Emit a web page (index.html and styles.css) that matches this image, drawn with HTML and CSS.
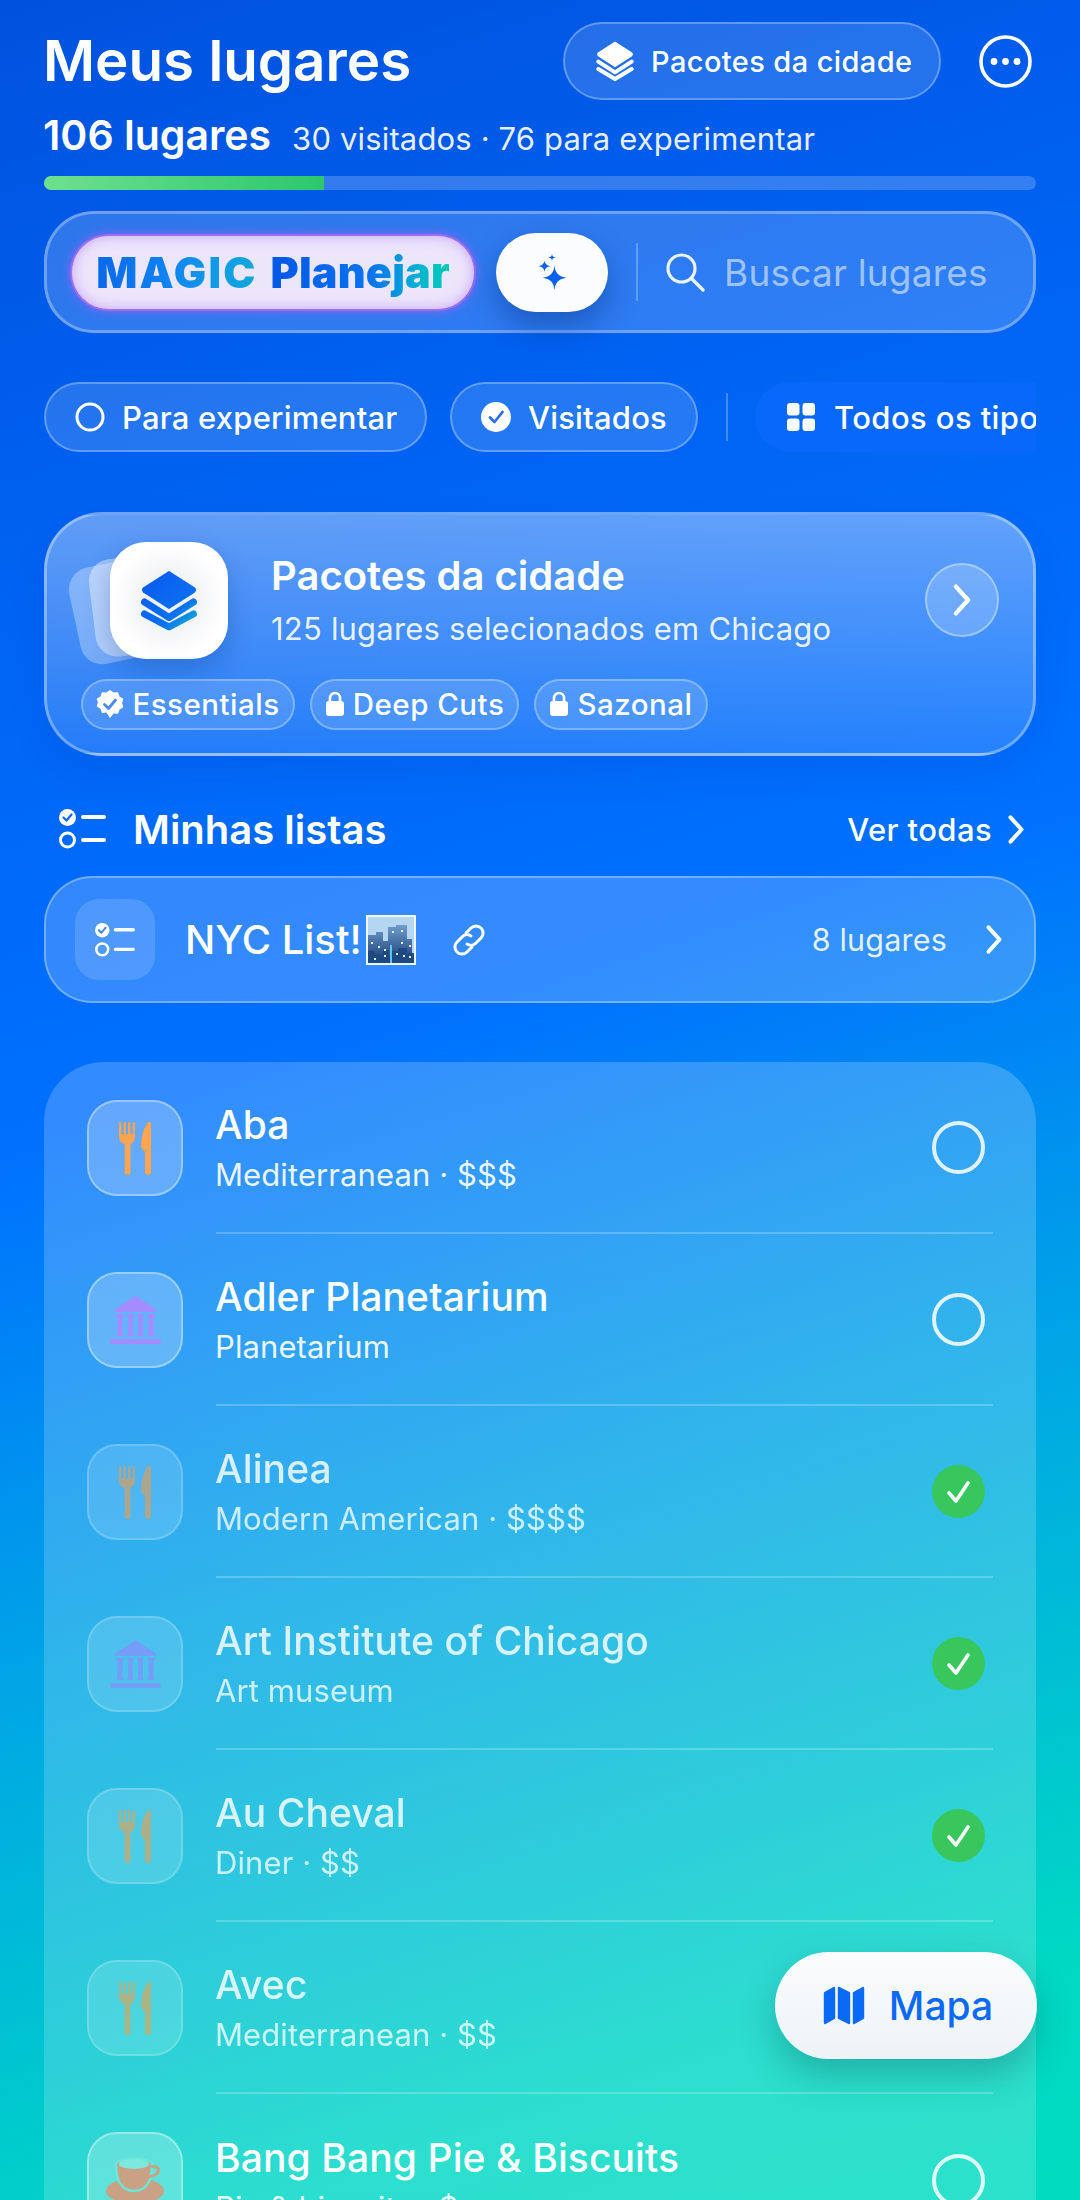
FILE: index.html
```html
<!DOCTYPE html>
<html lang="pt-BR">
<head>
  <meta charset="UTF-8" />
  <meta name="viewport" content="width=device-width, initial-scale=1.0" />
  <title>Meus lugares</title>
  <link rel="stylesheet" href="styles.css">
</head>
<body>
  <!-- shared icons -->
  <svg class="sprite" aria-hidden="true">
    <defs>
      <linearGradient id="stackGrad" gradientUnits="userSpaceOnUse" x1="6" y1="6" x2="54" y2="58">
        <stop offset="0" stop-color="#0a5cf0"/>
        <stop offset="0.65" stop-color="#0a70f0"/>
        <stop offset="1" stop-color="#14bcc8"/>
      </linearGradient>
      <linearGradient id="cityGrad" x1="0" y1="0" x2="0" y2="1">
        <stop offset="0" stop-color="#6f9ccc"/>
        <stop offset="1" stop-color="#163c74"/>
      </linearGradient>
    </defs>
    <symbol id="i-stack" viewBox="0 0 56 60">
      <path d="M28 2 L53 18 Q55 20 53 22 L28 38 L3 22 Q1 20 3 18 Z" fill="currentColor" stroke="currentColor" stroke-width="2" stroke-linejoin="round"/>
      <path d="M3 31 L28 47 L53 31" fill="none" stroke="currentColor" stroke-width="6" stroke-linecap="round" stroke-linejoin="round"/>
      <path d="M3 42 L28 57 L53 42" fill="none" stroke="currentColor" stroke-width="6" stroke-linecap="round" stroke-linejoin="round"/>
    </symbol>
    <symbol id="i-fork" viewBox="0 0 32 53">
      <path d="M0 1.2a1.2 1.2 0 0 1 2.4 0V12h2.200V1.200a1.200 1.200 0 0 1 2.400 0V12h2V1.200a1.200 1.200 0 0 1 2.400 0V12h2.200V1.200a1.200 1.200 0 0 1 2.400 0V15c0 3.500-2 6-4.500 7V50a2.900 2.900 0 0 1-5.800 0V22C2 21 0 18.500 0 15Z" fill="currentColor"/>
      <path d="M32 2C32-.5 29-.5 28 1.500 24 8 22 15 22 23c0 3.500 1.500 5.500 4 6V50a3 3 0 0 0 6 0Z" fill="currentColor"/>
    </symbol>
    <symbol id="i-museum" viewBox="0 0 51 49">
      <path d="M25.500 0 L46 13.500 Q47 16 45 16 H6 Q4 16 5 13.500 Z" fill="currentColor"/>
      <path d="M6 18h8l-1.500 3v16l1.500 3H6l1.500-3V21ZM17 18h7l-1.200 3v16l1.200 3h-7l1.200-3V21ZM27 18h7l-1.200 3v16l1.200 3h-7l1.200-3V21ZM37 18h8l-1.500 3v16l1.500 3h-8l1.500-3V21Z" fill="currentColor"/>
      <rect x="0" y="43" width="51" height="5" rx="1.500" fill="currentColor"/>
    </symbol>
    <symbol id="i-cup" viewBox="0 0 58 50">
      <ellipse cx="29" cy="36" rx="29" ry="13" fill="currentColor"/>
      <path d="M10 9 C10 2 46 2 46 9 C46 26 40 36 28 36 C16 36 10 26 10 9Z" fill="currentColor" stroke="#6be6d8" stroke-width="2.500"/>
      <ellipse cx="28" cy="9" rx="15" ry="5" fill="#7de8dc"/>
      <path d="M45 12 C55 9 56 21 42 22" fill="none" stroke="currentColor" stroke-width="3"/>
    </symbol>
    <symbol id="i-lists" viewBox="0 0 47 40">
      <circle cx="8.500" cy="8.500" r="8.500" fill="currentColor"/>
      <path d="M4.500 8.500l3 3 5-6" fill="none" stroke="var(--tick, #0a6af5)" stroke-width="2.200" stroke-linecap="round" stroke-linejoin="round"/>
      <circle cx="8.500" cy="31" r="7" fill="none" stroke="currentColor" stroke-width="3"/>
      <path d="M24 8h21M24 31h21" stroke="currentColor" stroke-width="4" stroke-linecap="round"/>
    </symbol>
    <symbol id="i-chev" viewBox="0 0 18 28">
      <path d="M4 3 L14 14 L4 25" fill="none" stroke="currentColor" stroke-width="3.600" stroke-linecap="round" stroke-linejoin="round"/>
    </symbol>
    <symbol id="i-lock" viewBox="0 0 20 26">
      <path d="M5 11V7a5 5 0 0 1 10 0v4" fill="none" stroke="currentColor" stroke-width="2.600"/>
      <rect x="1" y="10" width="18" height="15" rx="3" fill="currentColor"/>
    </symbol>
  </svg>

  <main class="page">
    <header class="top-row">
      <h1 class="page-title">Meus lugares</h1>
      <div class="top-actions">
        <button class="glass-chip packs-chip">
          <svg class="packs-icon"><use href="#i-stack"/></svg>
          Pacotes da cidade
        </button>
        <svg class="more-icon" viewBox="0 0 53 53">
          <circle cx="26.500" cy="26.500" r="24.500" fill="none" stroke="#fff" stroke-width="3.600"/>
          <circle cx="15" cy="26.500" r="3.400" fill="#fff"/>
          <circle cx="26.500" cy="26.500" r="3.400" fill="#fff"/>
          <circle cx="38" cy="26.500" r="3.400" fill="#fff"/>
        </svg>
      </div>
    </header>

    <div class="stats-row">
      <strong class="stats-total">106 lugares</strong>
      <span class="stats-detail">30 visitados · 76 para experimentar</span>
    </div>
    <div class="progress"><div class="progress-fill"></div></div>

    <section class="search-bar">
      <div class="magic-pill"><span class="magic-word">MAGIC</span> <span class="plan-word">Planejar</span></div>
      <button class="sparkle-btn">
        <svg class="sparkle-icon" viewBox="0 0 36 44">
          <path d="M21 14 C22 23 25 27 35 29 C25 31 22 35 21 44 C20 35 17 31 7 29 C17 27 20 23 21 14Z" fill="#0a62ec"/>
          <path d="M9 8 C9.500 12 11 14 16 15 C11 16 9.500 18 9 22 C8.500 18 7 16 2 15 C7 14 8.500 12 9 8Z" fill="#0a62ec"/>
          <path d="M18 0 C18.300 3 19 4 22.500 4.500 C19 5 18.300 6 18 9 C17.700 6 17 5 13.500 4.500 C17 4 17.700 3 18 0Z" fill="#0a62ec"/>
        </svg>
      </button>
      <div class="v-rule search-rule"></div>
      <svg class="search-icon" viewBox="0 0 40 40">
        <circle cx="16.500" cy="16.500" r="13.500" fill="none" stroke="#fff" stroke-opacity=".9" stroke-width="3.200"/>
        <path d="M26.500 26.500 L38 38" stroke="#fff" stroke-opacity=".9" stroke-width="3.400" stroke-linecap="round"/>
      </svg>
      <span class="search-text">Buscar lugares</span>
    </section>

    <nav class="filters">
      <button class="glass-chip filter-chip filter-try">
        <svg class="filter-icon" viewBox="0 0 30 30"><circle cx="15" cy="15" r="13" fill="none" stroke="#fff" stroke-width="3"/></svg>
        Para experimentar
      </button>
      <button class="glass-chip filter-chip filter-seen">
        <svg class="filter-icon" viewBox="0 0 30 30"><circle cx="15" cy="15" r="15" fill="#fff"/><path d="M9 15.500l4.500 4.500 8-10" fill="none" stroke="#2a70e8" stroke-width="2.800" stroke-linecap="round" stroke-linejoin="round"/></svg>
        Visitados
      </button>
      <div class="v-rule filter-rule"></div>
      <button class="type-chip">
        <svg class="grid-icon" viewBox="0 0 28 28">
          <rect width="12.500" height="12.500" rx="3" fill="#fff"/>
          <rect x="15.500" width="12.500" height="12.500" rx="3" fill="#fff"/>
          <rect y="15.500" width="12.500" height="12.500" rx="3" fill="#fff"/>
          <rect x="15.500" y="15.500" width="12.500" height="12.500" rx="3" fill="#fff"/>
        </svg>
        Todos os tipos
      </button>
    </nav>

    <section class="packs-card">
      <div class="packs-main">
        <div class="packs-art">
          <div class="art-back art-back-far"></div>
          <div class="art-back art-back-near"></div>
          <div class="art-front">
            <svg class="art-stack" viewBox="0 0 56 60">
              <path d="M28 1 L53 17 Q55 19 53 21 L28 37 L3 21 Q1 19 3 17 Z" fill="url(#stackGrad)" stroke="url(#stackGrad)" stroke-width="2" stroke-linejoin="round"/>
              <path d="M3.500 31 L28 46.500 L52.500 31" fill="none" stroke="url(#stackGrad)" stroke-width="7" stroke-linecap="round" stroke-linejoin="round"/>
              <path d="M3.500 43 L28 56 L52.500 43" fill="none" stroke="url(#stackGrad)" stroke-width="7" stroke-linecap="round" stroke-linejoin="round"/>
            </svg>
          </div>
        </div>
        <div class="packs-text">
          <h2 class="packs-title">Pacotes da cidade</h2>
          <p class="packs-sub">125 lugares selecionados em Chicago</p>
        </div>
        <div class="circle-next"><svg class="chev-lg"><use href="#i-chev"/></svg></div>
      </div>
      <div class="pack-tags">
        <span class="pack-tag tag-ess">
          <svg class="tag-badge" viewBox="0 0 28 28">
            <path d="M14 0l3.600 2.600 4.400-.4 1.600 4.200 3.700 2.400-1.200 4.200 1.200 4.200-3.700 2.400-1.600 4.200-4.400-.4L14 28l-3.600-5.400-4.400.4-1.600-4.200L.7 16.400 1.900 12.200.7 8.800l3.700-2.400L6 2.200l4.400.4Z" fill="#fff"/>
            <path d="M8.500 14.500l4 4 7-8.500" fill="none" stroke="#4a8cec" stroke-width="2.800" stroke-linecap="round" stroke-linejoin="round"/>
          </svg>
          Essentials
        </span>
        <span class="pack-tag tag-deep"><svg class="tag-lock"><use href="#i-lock"/></svg>Deep Cuts</span>
        <span class="pack-tag tag-season"><svg class="tag-lock"><use href="#i-lock"/></svg>Sazonal</span>
      </div>
    </section>

    <div class="section-head">
      <svg class="section-icon"><use href="#i-lists"/></svg>
      <h2 class="section-title">Minhas listas</h2>
      <a class="see-all">Ver todas <svg class="chev-sm"><use href="#i-chev"/></svg></a>
    </div>

    <section class="list-card">
      <div class="list-icon-box"><svg class="list-icon"><use href="#i-lists"/></svg></div>
      <span class="list-name">NYC List!</span>
      <svg class="city-emoji" viewBox="0 0 50 50">
        <rect width="50" height="50" fill="#f2f5f8"/>
        <rect x="2" y="2" width="46" height="46" fill="#b4d6f0"/>
        <path d="M2 48V20h8v-3h7v9h5V12h8v-2h11v14h5v24Z" fill="url(#cityGrad)"/>
        <path d="M2 48V36h7v3h8v-4h6v13ZM26 48V36h6v-3h9v5h7v10Z" fill="#1d4a82"/>
        <rect x="24" y="30" width="2" height="18" fill="#58c8ee"/>
        <path d="M5 27h2v2H5ZM12 31h2v2h-2ZM18 34h2v2h-2ZM18 40h2v2h-2ZM35 27h2v2h-2ZM43 30h2v2h-2ZM30 38h2v2h-2ZM37 40h2v2h-2ZM43 41h2v2h-2ZM8 43h2v2H8ZM26 16h2v2h-2ZM35 15h2v2h-2Z" fill="#e6eef6"/>
      </svg>
      <svg class="link-icon" viewBox="0 0 34 34">
        <path d="M14 10l5-5a7 7 0 0 1 10 10l-5 5a7 7 0 0 1-9 1" fill="none" stroke="#fff" stroke-width="3" stroke-linecap="round"/>
        <path d="M20 24l-5 5A7 7 0 0 1 5 19l5-5a7 7 0 0 1 9-1" fill="none" stroke="#fff" stroke-width="3" stroke-linecap="round"/>
      </svg>
      <span class="list-count">8 lugares</span>
      <svg class="chev-md"><use href="#i-chev"/></svg>
    </section>

    <section class="places">
      <article class="place">
        <div class="place-icon icon-food"><svg class="glyph-food"><use href="#i-fork"/></svg></div>
        <div class="place-body">
          <div class="place-text">
            <h3 class="place-name">Aba</h3>
            <p class="place-sub">Mediterranean · $$$</p>
          </div>
          <span class="radio"></span>
        </div>
      </article>
      <article class="place">
        <div class="place-icon icon-museum"><svg class="glyph-museum"><use href="#i-museum"/></svg></div>
        <div class="place-body">
          <div class="place-text">
            <h3 class="place-name">Adler Planetarium</h3>
            <p class="place-sub">Planetarium</p>
          </div>
          <span class="radio"></span>
        </div>
      </article>
      <article class="place is-visited">
        <div class="place-icon icon-food"><svg class="glyph-food"><use href="#i-fork"/></svg></div>
        <div class="place-body">
          <div class="place-text">
            <h3 class="place-name">Alinea</h3>
            <p class="place-sub">Modern American · $$$$</p>
          </div>
          <span class="done"><svg viewBox="0 0 53 53"><path d="M17 28l7 8 12-18" fill="none" stroke="#fff" stroke-width="3.600" stroke-linecap="round" stroke-linejoin="round"/></svg></span>
        </div>
      </article>
      <article class="place is-visited">
        <div class="place-icon icon-museum"><svg class="glyph-museum"><use href="#i-museum"/></svg></div>
        <div class="place-body">
          <div class="place-text">
            <h3 class="place-name">Art Institute of Chicago</h3>
            <p class="place-sub">Art museum</p>
          </div>
          <span class="done"><svg viewBox="0 0 53 53"><path d="M17 28l7 8 12-18" fill="none" stroke="#fff" stroke-width="3.600" stroke-linecap="round" stroke-linejoin="round"/></svg></span>
        </div>
      </article>
      <article class="place is-visited">
        <div class="place-icon icon-food"><svg class="glyph-food"><use href="#i-fork"/></svg></div>
        <div class="place-body">
          <div class="place-text">
            <h3 class="place-name">Au Cheval</h3>
            <p class="place-sub">Diner · $$</p>
          </div>
          <span class="done"><svg viewBox="0 0 53 53"><path d="M17 28l7 8 12-18" fill="none" stroke="#fff" stroke-width="3.600" stroke-linecap="round" stroke-linejoin="round"/></svg></span>
        </div>
      </article>
      <article class="place is-visited">
        <div class="place-icon icon-food"><svg class="glyph-food"><use href="#i-fork"/></svg></div>
        <div class="place-body">
          <div class="place-text">
            <h3 class="place-name">Avec</h3>
            <p class="place-sub">Mediterranean · $$</p>
          </div>
        </div>
      </article>
      <article class="place">
        <div class="place-icon icon-cafe"><svg class="glyph-cup"><use href="#i-cup"/></svg></div>
        <div class="place-body">
          <div class="place-text">
            <h3 class="place-name">Bang Bang Pie &amp; Biscuits</h3>
            <p class="place-sub">Pie &amp; biscuits · $</p>
          </div>
          <span class="radio"></span>
        </div>
      </article>
    </section>
  </main>

  <button class="map-btn">
    <svg class="map-icon" viewBox="0 0 42 39">
      <path d="M2 7 L11 2 V32 L2 37 Z" fill="#0a6af5" stroke="#0a6af5" stroke-width="2.400" stroke-linejoin="round"/>
      <path d="M16 2 L26 7 V37 L16 32 Z" fill="#0a6af5" stroke="#0a6af5" stroke-width="2.400" stroke-linejoin="round"/>
      <path d="M31 7 L40 2 V32 L31 37 Z" fill="#0a6af5" stroke="#0a6af5" stroke-width="2.400" stroke-linejoin="round"/>
    </svg>
    Mapa
  </button>
</body>
</html>
```

FILE: styles.css
```css
* {
  box-sizing: border-box;
}
html, body {
  margin: 0;
  padding: 0;
}
body {
  position: relative;
  width: 1080px;
  height: 2200px;
  overflow: hidden;
  font-family: 'Inter', sans-serif;
  color: #fff;
  background: linear-gradient(162deg, #0052de 0%, #0066f6 28%, #0070ff 45%, #00a5e6 66%, #00d8c4 90%, #00dcc0 100%);
}
button {
  font-family: inherit;
  color: inherit;
  border: none;
  padding: 0;
}
h1, h2, h3, p {
  margin: 0;
}
.sprite {
  position: absolute;
  width: 0;
  height: 0;
}
.page {
  padding: 22px 44px 0;
}

/* header */
.top-row {
  display: flex;
  align-items: center;
  justify-content: space-between;
  height: 78px;
}
.page-title {
  margin-left: -1px;
  font-size: 56.5px;
  font-weight: 600;
  line-height: 78px;
}
.top-actions {
  display: flex;
  align-items: center;
  gap: 38px;
  padding-right: 4px;
}
.glass-chip {
  display: flex;
  align-items: center;
  background: rgba(255, 255, 255, 0.14);
  border: 2px solid rgba(255, 255, 255, 0.28);
  border-radius: 40px;
  color: #fff;
}
.packs-chip {
  width: 378px;
  height: 78px;
  padding-left: 31px;
  gap: 17px;
  font-size: 29px;
  font-weight: 550;
  letter-spacing: 0.4px;
}
.packs-icon {
  width: 38px;
  height: 40px;
  color: #fff;
}
.more-icon {
  width: 53px;
  height: 53px;
}
.stats-row {
  display: flex;
  align-items: baseline;
  height: 40px;
  margin-top: 15px;
  gap: 21px;
  line-height: 40px;
}
.stats-total {
  margin-left: -1px;
  font-size: 41px;
  font-weight: 600;
}
.stats-detail {
  font-size: 31px;
  letter-spacing: 0.15px;
  color: rgba(255, 255, 255, 0.92);
}
.progress {
  height: 14px;
  margin-top: 21px;
  border-radius: 7px;
  background: rgba(255, 255, 255, 0.2);
  overflow: hidden;
}
.progress-fill {
  width: 280px;
  height: 100%;
  background: linear-gradient(90deg, #6ee08e, #2cc86c);
}

/* search */
.search-bar {
  display: flex;
  align-items: center;
  height: 122px;
  margin-top: 21px;
  padding-left: 25px;
  background: rgba(255, 255, 255, 0.18);
  border: 3px solid rgba(255, 255, 255, 0.3);
  border-radius: 50px;
}
.magic-pill {
  display: flex;
  align-items: center;
  justify-content: center;
  gap: 13px;
  width: 402px;
  height: 73px;
  border-radius: 38px;
  background: #ece6fb;
  box-shadow: 0 0 0 2px #9d6ef2, 0 0 10px 3px rgba(150, 100, 245, 0.75), inset 0 0 14px rgba(190, 150, 250, 0.8);
  font-size: 43px;
  font-weight: 900;
}
.magic-word {
  letter-spacing: 2.2px;
  background: linear-gradient(90deg, #0a68e8, #0f80f2 40%, #1098e8 70%, #10a8d8);
  -webkit-background-clip: text;
  background-clip: text;
  color: transparent;
}
.plan-word {
  letter-spacing: 0.2px;
  padding-bottom: 6px;
  margin-bottom: -6px;
  background: linear-gradient(90deg, #0058e6 0%, #0a72f0 55%, #00b8d0 85%, #00ccb0 100%);
  -webkit-background-clip: text;
  background-clip: text;
  color: transparent;
}
.sparkle-btn {
  display: flex;
  align-items: center;
  justify-content: center;
  width: 112px;
  height: 79px;
  margin-left: 22px;
  border-radius: 40px;
  background: #fbfcfe;
  box-shadow: 0 14px 30px rgba(0, 40, 120, 0.4);
}
.sparkle-icon {
  width: 30px;
  height: 38px;
}
.v-rule {
  width: 2px;
  background: rgba(255, 255, 255, 0.25);
}
.search-rule {
  height: 58px;
  margin-left: 28px;
}
.search-icon {
  width: 40px;
  height: 40px;
  margin-left: 27px;
}
.search-text {
  margin-left: 19px;
  font-size: 37px;
  letter-spacing: 0.2px;
  color: rgba(255, 255, 255, 0.55);
}

/* filters */
.filters {
  display: flex;
  align-items: center;
  height: 70px;
  margin-top: 49px;
  overflow: hidden;
}
.filter-chip {
  height: 70px;
  padding-left: 29px;
  gap: 17px;
  font-size: 31px;
  font-weight: 500;
  letter-spacing: 0.2px;
  flex: none;
}
.filter-try {
  width: 383px;
}
.filter-seen {
  width: 248px;
  margin-left: 23px;
}
.filter-icon {
  width: 30px;
  height: 30px;
}
.filter-rule {
  height: 48px;
  margin-left: 28px;
  flex: none;
}
.type-chip {
  display: flex;
  align-items: center;
  flex: none;
  height: 70px;
  margin-left: 27px;
  padding: 0 32px;
  gap: 19px;
  border-radius: 35px;
  background: #0868fc;
  font-size: 31px;
  font-weight: 550;
  letter-spacing: 0.4px;
}
.grid-icon {
  width: 28px;
  height: 28px;
}

/* packs card */
.packs-card {
  height: 244px;
  margin-top: 60px;
  padding: 27px 34px 0 27px;
  border: 3px solid rgba(255, 255, 255, 0.32);
  border-radius: 58px;
  background: linear-gradient(180deg, rgba(255, 255, 255, 0.38), rgba(255, 255, 255, 0.14));
  box-shadow: 0 16px 34px rgba(0, 50, 150, 0.12);
}
.packs-main {
  display: flex;
  align-items: center;
  height: 117px;
}
.packs-art {
  position: relative;
  width: 193px;
  height: 117px;
  flex: none;
  margin-left: 4px;
}
.art-back {
  position: absolute;
  width: 90px;
  height: 98px;
  border-radius: 22px;
}
.art-back-far {
  left: -4px;
  top: 20px;
  background: rgba(255, 255, 255, 0.3);
  transform: rotate(-12deg);
}
.art-back-near {
  left: 14px;
  top: 14px;
  background: rgba(255, 255, 255, 0.42);
  transform: rotate(-7deg);
}
.art-front {
  position: absolute;
  left: 32px;
  top: 0;
  display: flex;
  align-items: center;
  justify-content: center;
  width: 118px;
  height: 117px;
  border-radius: 36px;
  background: radial-gradient(circle, #f0f1f4 25%, #fff 70%);
  box-shadow: 0 10px 26px rgba(0, 40, 120, 0.25);
}
.art-stack {
  width: 56px;
  height: 60px;
}
.packs-text {
  flex: 1;
  margin-top: -2px;
}
.packs-title {
  font-size: 40px;
  font-weight: 600;
  line-height: 48px;
}
.packs-sub {
  margin-top: 10px;
  font-size: 31px;
  letter-spacing: 0.2px;
  color: rgba(255, 255, 255, 0.9);
}
.circle-next {
  display: flex;
  align-items: center;
  justify-content: center;
  width: 74px;
  height: 74px;
  margin-top: -1px;
  border-radius: 50%;
  background: rgba(255, 255, 255, 0.2);
  border: 2px solid rgba(255, 255, 255, 0.35);
}
.chev-lg {
  width: 22px;
  height: 34px;
  color: #fff;
}
.pack-tags {
  display: flex;
  gap: 15px;
  margin: 20px 0 0 7px;
}
.pack-tag {
  display: flex;
  align-items: center;
  justify-content: center;
  height: 51px;
  padding-bottom: 2px;
  gap: 8px;
  background: rgba(255, 255, 255, 0.14);
  border: 2px solid rgba(255, 255, 255, 0.28);
  border-radius: 26px;
  font-size: 29.5px;
  font-weight: 500;
  letter-spacing: 0.5px;
}
.tag-ess {
  width: 214px;
}
.tag-deep {
  width: 209px;
}
.tag-season {
  width: 174px;
}
.tag-badge {
  width: 28px;
  height: 28px;
}
.tag-lock {
  width: 20px;
  height: 26px;
  color: #fff;
}

/* my lists */
.section-head {
  display: flex;
  align-items: center;
  height: 50px;
  margin-top: 48px;
  padding-left: 15px;
}
.section-icon {
  width: 47px;
  height: 40px;
  color: #fff;
  --tick: #0a6af5;
}
.section-title {
  margin-left: 27px;
  font-size: 40px;
  font-weight: 600;
}
.see-all {
  display: flex;
  align-items: center;
  gap: 14px;
  margin-left: auto;
  padding-right: 10px;
  font-size: 31px;
  font-weight: 550;
  letter-spacing: 0.4px;
}
.chev-sm {
  width: 20px;
  height: 31px;
  color: #fff;
}
.list-card {
  display: flex;
  align-items: center;
  height: 127px;
  margin-top: 22px;
  padding: 0 30px 0 29px;
  border: 2px solid rgba(255, 255, 255, 0.3);
  border-radius: 48px;
  background: rgba(255, 255, 255, 0.2);
}
.list-icon-box {
  display: flex;
  align-items: center;
  justify-content: center;
  width: 80px;
  height: 81px;
  border-radius: 24px;
  background: rgba(255, 255, 255, 0.14);
}
.list-icon {
  width: 40px;
  height: 34px;
  color: #fff;
  --tick: #3d85f5;
}
.list-name {
  margin-left: 30px;
  font-size: 40px;
  font-weight: 500;
}
.city-emoji {
  width: 50px;
  height: 50px;
  margin-left: 4px;
}
.link-icon {
  width: 34px;
  height: 34px;
  margin-left: 36px;
}
.list-count {
  margin-left: auto;
  font-size: 30.5px;
  letter-spacing: 0.2px;
  color: rgba(255, 255, 255, 0.88);
}
.chev-md {
  width: 20px;
  height: 31px;
  margin-left: 37px;
  color: #fff;
}

/* places */
.places {
  margin-top: 59px;
  padding: 0 43px;
  border-radius: 60px 60px 0 0;
  background: linear-gradient(180deg, rgba(255, 255, 255, 0.2), rgba(255, 255, 255, 0.17));
}
.place {
  display: flex;
  align-items: center;
  gap: 33px;
  height: 172px;
}
.place-icon {
  display: flex;
  align-items: center;
  justify-content: center;
  flex: none;
  width: 96px;
  height: 96px;
  border-radius: 30px;
  background: rgba(255, 255, 255, 0.24);
  border: 2px solid rgba(255, 255, 255, 0.35);
}
.icon-food {
  color: #ffa450;
}
.icon-museum {
  color: #a48cff;
}
.icon-cafe {
  color: #c9a286;
}
.glyph-food {
  width: 32px;
  height: 53px;
}
.glyph-museum {
  width: 51px;
  height: 49px;
}
.glyph-cup {
  width: 58px;
  height: 50px;
}
.place-body {
  display: flex;
  align-items: center;
  justify-content: space-between;
  flex: 1;
  height: 100%;
  padding-right: 8px;
  border-bottom: 2px solid rgba(255, 255, 255, 0.22);
}
.place:last-child .place-body {
  border-bottom: none;
}
.place-name {
  margin-left: -1px;
  font-size: 39px;
  font-weight: 550;
  letter-spacing: 0.1px;
  line-height: 46px;
}
.place-sub {
  margin-top: 9px;
  margin-left: -1px;
  font-size: 31px;
  line-height: 36px;
  letter-spacing: 0.1px;
  color: rgba(255, 255, 255, 0.92);
}
.is-visited .place-text {
  opacity: 0.82;
}
.is-visited .place-icon {
  opacity: 0.6;
}
.radio {
  width: 53px;
  height: 53px;
  border-radius: 50%;
  border: 4px solid rgba(255, 255, 255, 0.85);
}
.done {
  width: 53px;
  height: 53px;
  border-radius: 50%;
  background: #38c75c;
}
.done svg {
  display: block;
  width: 53px;
  height: 53px;
}

/* floating map button */
.map-btn {
  position: absolute;
  left: 775px;
  top: 1952px;
  display: flex;
  align-items: center;
  justify-content: center;
  gap: 24px;
  width: 262px;
  height: 107px;
  padding-left: 4px;
  border-radius: 54px;
  background: linear-gradient(180deg, #fbfcfd, #edf3f5);
  box-shadow: 0 16px 36px rgba(0, 70, 80, 0.3);
  color: #0a6af5;
  font-size: 39px;
  font-weight: 500;
}
.map-icon {
  width: 42px;
  height: 39px;
}
```
